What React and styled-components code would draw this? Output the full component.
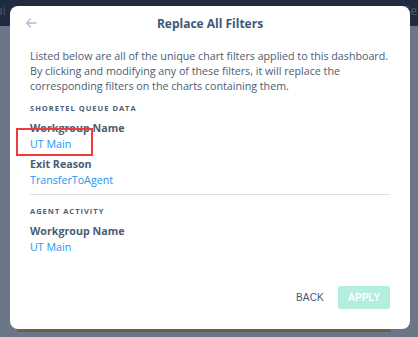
import React from 'react';
import styled, { createGlobalStyle } from 'styled-components';

const GlobalStyle = createGlobalStyle`
  html, body {
    margin: 0;
    padding: 0;
    width: 418px;
    height: 337px;
    overflow: hidden;
    font-family: "Open Sans", "Liberation Sans", sans-serif;
  }
`;

const filterGroups = [
  {
    title: 'SHORETEL QUEUE DATA',
    filters: [
      { name: 'Workgroup Name', value: 'UT Main', highlight: true },
      { name: 'Exit Reason', value: 'TransferToAgent' },
    ],
  },
  {
    title: 'AGENT ACTIVITY',
    filters: [{ name: 'Workgroup Name', value: 'UT Main' }],
  },
];

function App() {
  return (
    <>
      <GlobalStyle />
      <StBackdrop>
        <StTopBar>
          <StGhostText>ai</StGhostText>
          <StGhostText>Ser</StGhostText>
        </StTopBar>
        <StBottomLine />
        <StModal>
          <StHeader>
            <StBackArrow viewBox="0 0 14 14">
              <path d="M12 7H2.5M6.5 3L2.5 7l4 4" fill="none" stroke="currentColor" strokeWidth="1.3" strokeLinecap="round" strokeLinejoin="round" />
            </StBackArrow>
            <StTitle>Replace All Filters</StTitle>
          </StHeader>
          <StIntro>
            Listed below are all of the unique chart filters applied to this dashboard.
            By clicking and modifying any of these filters, it will replace the
            corresponding filters on the charts containing them.
          </StIntro>
          {filterGroups.map((group, i) => (
            <StGroup key={group.title} $divider={i > 0}>
              <StGroupTitle>{group.title}</StGroupTitle>
              {group.filters.map((f) => (
                <StFilter key={f.name + f.value}>
                  <StFilterName>{f.name}</StFilterName>
                  <StFilterValue>{f.value}</StFilterValue>
                  {f.highlight && <StHighlight />}
                </StFilter>
              ))}
            </StGroup>
          ))}
          <StFooter>
            <StBackButton>BACK</StBackButton>
            <StApplyButton disabled>APPLY</StApplyButton>
          </StFooter>
        </StModal>
      </StBackdrop>
    </>
  );
}

export default App;

const StBackdrop = styled.div`
  position: relative;
  width: 418px;
  height: 337px;
  background: #6b7788;
  overflow: hidden;
`;

const StTopBar = styled.div`
  height: 26px;
  background: #1f2b40;
  display: flex;
  justify-content: space-between;
  align-items: flex-start;
  padding-top: 4px;
  box-sizing: border-box;
`;

const StGhostText = styled.span`
  font-size: 12px;
  line-height: 14px;
  color: #4e5a6c;
  margin: 0 -4px;
`;

const StBottomLine = styled.div`
  position: absolute;
  left: 17px;
  top: 329px;
  width: 374px;
  height: 3px;
  background: #6e6048;
`;

const StModal = styled.div`
  position: absolute;
  left: 10px;
  top: 6px;
  width: 400px;
  height: 323px;
  box-sizing: border-box;
  background: #fff;
  border-radius: 8px;
  padding: 0 20px 20px;
  display: flex;
  flex-direction: column;
`;

const StHeader = styled.div`
  position: relative;
  height: 34px;
  display: flex;
  align-items: center;
  justify-content: center;
`;

const StBackArrow = styled.svg`
  position: absolute;
  left: -6px;
  top: 10px;
  width: 14px;
  height: 14px;
  color: #aebdcd;
`;

const StTitle = styled.h1`
  margin: 0;
  font-size: 12px;
  font-weight: 700;
  color: #3e5878;
`;

const StIntro = styled.p`
  margin: 9px 0 0;
  font-size: 10.7px;
  line-height: 15px;
  color: #4b5d72;
`;

const StGroup = styled.div`
  margin-top: ${(p) => (p.$divider ? '6px' : '8px')};
  padding-top: ${(p) => (p.$divider ? '10px' : '0')};
  border-top: ${(p) => (p.$divider ? '1px solid #d9dfe6' : 'none')};
  display: flex;
  flex-direction: column;
  gap: 4px;
`;

const StGroupTitle = styled.div`
  font-size: 7.5px;
  line-height: 12px;
  font-weight: 700;
  letter-spacing: 1px;
  color: #4f6075;
  margin-bottom: 2px;
`;

const StFilter = styled.div`
  position: relative;
  display: flex;
  flex-direction: column;
`;

const StFilterName = styled.div`
  font-size: 10.7px;
  line-height: 16px;
  font-weight: 700;
  color: #4b5d72;
`;

const StFilterValue = styled.div`
  font-size: 10.7px;
  line-height: 16px;
  color: #2196f3;
`;

const StHighlight = styled.div`
  position: absolute;
  left: -14px;
  top: 8px;
  width: 77px;
  height: 28px;
  box-sizing: border-box;
  border: 2px solid #ee3b3b;
`;

const StFooter = styled.div`
  margin-top: auto;
  display: flex;
  justify-content: flex-end;
  align-items: center;
  gap: 14px;
`;

const StBackButton = styled.button`
  border: none;
  background: none;
  padding: 0;
  font-family: "Liberation Sans", Arial, sans-serif;
  font-size: 10px;
  font-weight: 400;
  color: #3e5878;
  letter-spacing: 0.2px;
`;

const StApplyButton = styled.button`
  border: none;
  border-radius: 2px;
  width: 52px;
  height: 23px;
  background: #b3eedf;
  color: #fff;
  font-family: "Liberation Sans", Arial, sans-serif;
  font-size: 10px;
  font-weight: 700;
`;
